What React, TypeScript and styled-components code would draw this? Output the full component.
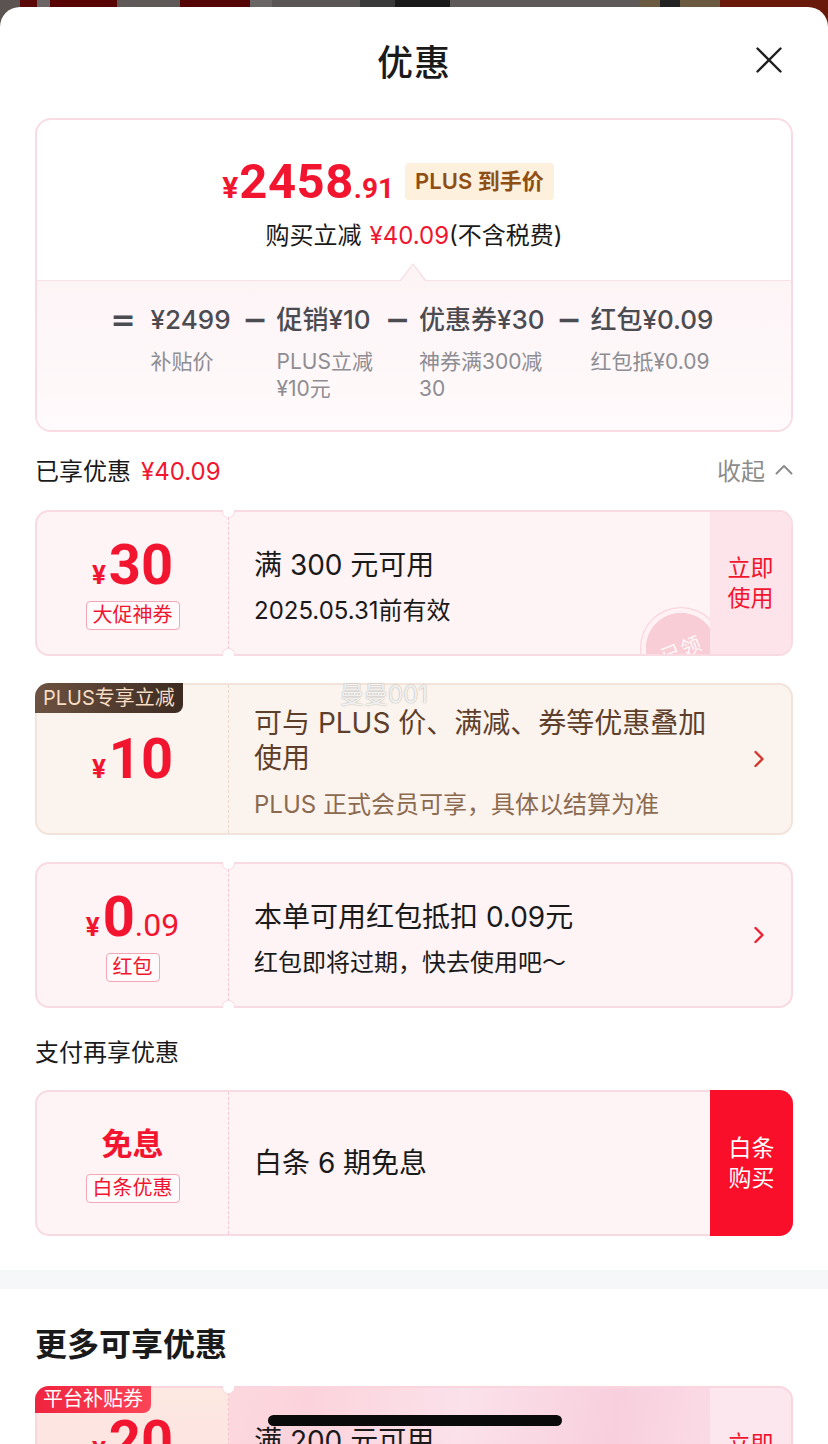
import React from 'react';
import styled, { createGlobalStyle, css } from 'styled-components';

const RED = '#f2152f';
const TEXT = '#1a1a1a';
const SANS = `"Inter", "Noto Sans CJK SC", sans-serif`;
const NUM = `"Roboto", "Inter", "Noto Sans CJK SC", sans-serif`;

const Global = createGlobalStyle`
  html, body { margin: 0; padding: 0; width: 828px; height: 1444px; overflow: hidden; }
  body { font-family: ${SANS}; color: ${TEXT}; }
  #root { width: 828px; height: 1444px; overflow: hidden; }
  * { box-sizing: border-box; }
`;

const Page = styled.div`
  position: relative;
  width: 828px;
  height: 1444px;
  overflow: hidden;
  padding-top: 7px;
  background: linear-gradient(
    90deg,
    #5b5252 0 20px, #5a0808 20px 37px, #6b6565 37px 50px, #580404 50px 117px,
    #5f5a58 117px 180px, #540606 180px 250px, #6a6666 250px 272px, #5a5656 272px 360px,
    #3a3a3a 360px 395px, #1a1a1a 395px 450px, #5e5a5a 450px 640px, #6a5a40 640px 660px,
    #222 660px 680px, #6a5a40 680px 720px, #6a1a0a 720px 828px
  );
`;

const Sheet = styled.div`
  position: relative;
  background: #fff;
  border-radius: 20px 20px 0 0;
  min-height: 1437px;
`;

const Header = styled.header`
  display: grid;
  grid-template-columns: 1fr auto 1fr;
  align-items: center;
  height: 106px;
`;

const Title = styled.h1`
  grid-column: 2;
  margin: 0;
  font-size: 36px;
  font-weight: 500;
  letter-spacing: 1px;
`;

const Close = styled.button`
  justify-self: end;
  margin-right: 45px;
  width: 28px;
  height: 28px;
  padding: 0;
  border: 0;
  background: none;
  display: flex;
  align-items: center;
  justify-content: center;
`;

const Content = styled.div`
  padding: 5px 35px 0;
`;

/* ---------- summary card ---------- */
const Summary = styled.section`
  border: 2px solid #f9dce3;
  border-radius: 16px;
  background: #fff;
`;

const SummaryTop = styled.div`
  padding: 36px 0 26px;
`;

const PriceRow = styled.div`
  display: flex;
  align-items: center;
  justify-content: center;
  gap: 11px;
  height: 50px;
  padding-right: 52px;
`;

const Price = styled.div`
  display: flex;
  align-items: baseline;
  color: ${RED};
  font-family: ${NUM};
  font-weight: 700;
  line-height: 1;
`;

const PriceYen = styled.span`
  font-size: 30px;
  margin-right: 1px;
`;
const PriceInt = styled.span`
  font-size: 49px;
  letter-spacing: 0.5px;
`;
const PriceDec = styled.span`
  font-size: 28px;
`;

const PlusTag = styled.span`
  height: 37px;
  line-height: 37px;
  padding: 0 10px;
  border-radius: 4px;
  background: #fdf0dc;
  color: #8f4f14;
  font-size: 22px;
  font-weight: 600;
`;

const SaveLine = styled.div`
  margin-top: 12px;
  text-align: center;
  font-size: 24px;
  line-height: 36px;
  color: ${TEXT};
`;

const Red = styled.span<{ $gap?: number }>`
  color: ${RED};
  margin-left: ${(p) => p.$gap ?? 0}px;
`;

const SummaryBottom = styled.div`
  position: relative;
  border-top: 1px solid #f9e1e6;
  border-radius: 0 0 14px 14px;
  background: linear-gradient(180deg, #fdf4f6 0%, #fffafb 100%);
  padding: 21px 0 28px;

  &::before,
  &::after {
    content: '';
    position: absolute;
    left: 50%;
    clip-path: polygon(50% 0, 100% 100%, 0 100%);
  }
  &::before {
    top: -18px;
    width: 28px;
    height: 18px;
    margin-left: -15px;
    background: #f9e1e6;
  }
  &::after {
    top: -16px;
    width: 25px;
    height: 17px;
    margin-left: -13.5px;
    background: #fdf4f6;
  }
`;

const Equation = styled.div`
  display: flex;
  justify-content: center;
  align-items: flex-start;
  gap: 12px;
  padding-right: 4px;
`;

const Op = styled.span<{ $eq?: boolean }>`
  width: 22px;
  text-align: center;
  font-family: "DejaVu Sans", sans-serif;
  font-size: 30px;
  font-weight: 700;
  line-height: 36px;
  color: #4b4b52;
  margin-right: ${(p) => (p.$eq ? 6 : 0)}px;
`;

const Term = styled.div`
  display: flex;
  flex-direction: column;
`;

const TermMain = styled.span`
  font-size: 26px;
  font-weight: 500;
  line-height: 36px;
  color: #4b4b52;
  white-space: nowrap;
`;

const TermSub = styled.span`
  margin-top: 10px;
  font-size: 21px;
  line-height: 27px;
  color: #8d8d93;
  white-space: nowrap;
`;

/* ---------- section headings ---------- */
const SectionHead = styled.div<{ $top: number; $bottom: number }>`
  display: flex;
  justify-content: space-between;
  align-items: center;
  height: 40px;
  margin: ${(p) => p.$top}px 0 ${(p) => p.$bottom}px;
  font-size: 24px;
  color: ${TEXT};
`;

const Collapse = styled.span`
  display: flex;
  align-items: center;
  gap: 10px;
  color: #8c8c8c;
`;

const BigHead = styled.h2`
  margin: 27px 0 17px;
  height: 48px;
  line-height: 48px;
  font-size: 32px;
  font-weight: 600;
  color: ${TEXT};
`;

const Band = styled.div`
  margin-top: 34px;
  height: 19px;
  background: #f6f7f9;
`;

const CouponList = styled.div`
  display: flex;
  flex-direction: column;
  gap: 27px;
`;

/* ---------- coupon card ---------- */
type Tone = 'pink' | 'plus' | 'promo';

const toneBorder: Record<Tone, string> = {
  pink: '#f8dbe2',
  plus: '#f2e4da',
  promo: '#f9d6de',
};
const toneDash: Record<Tone, string> = {
  pink: '#f2c9d2',
  plus: '#ead8ca',
  promo: '#f3c4cf',
};

const Card = styled.div<{ $tone: Tone; $h: number }>`
  position: relative;
  display: flex;
  height: ${(p) => p.$h}px;
  border: 2px solid ${(p) => toneBorder[p.$tone]};
  border-radius: 14px;
  background: ${(p) =>
    p.$tone === 'plus'
      ? '#fbf4ee'
      : p.$tone === 'promo'
      ? 'linear-gradient(100deg, #fde4e4 0%, #fcd3dc 35%, #fbe1ea 55%, #f8cfdd 75%, #fde6ee 100%)'
      : '#fef3f5'};
`;

const Left = styled.div<{ $tone: Tone }>`
  width: 192px;
  flex: none;
  display: flex;
  flex-direction: column;
  align-items: center;
  justify-content: center;
  border-right: 1px dashed ${(p) => toneDash[p.$tone]};
  border-radius: 12px 0 0 12px;
  ${(p) =>
    p.$tone === 'promo' &&
    css`
      background: linear-gradient(180deg, #fde8e2, #fde0e0);
    `}
`;

const Notch = styled.span<{ $pos: 'top' | 'bottom'; $tone: Tone }>`
  position: absolute;
  left: 185px;
  width: 13px;
  height: 8px;
  background: #fff;
  border: 1.5px solid ${(p) => toneBorder[p.$tone]};
  ${(p) =>
    p.$pos === 'top'
      ? css`
          top: -2px;
          border-top: 0;
          border-radius: 0 0 7px 7px;
        `
      : css`
          bottom: -2px;
          border-bottom: 0;
          border-radius: 7px 7px 0 0;
        `}
`;

const Mid = styled.div<{ $shift: number }>`
  position: relative;
  flex: 1;
  min-width: 0;
  overflow: hidden;
  display: flex;
  flex-direction: column;
  justify-content: center;
  padding-left: 25px;
  padding-top: ${(p) => p.$shift}px;
`;

const MainText = styled.div<{ $brown?: boolean }>`
  font-size: 28px;
  line-height: 36px;
  color: ${(p) => (p.$brown ? '#5e3f2b' : TEXT)};
  white-space: nowrap;
`;

const PlusMain = styled(MainText)`
  line-height: 35px;
`;

const SubText = styled.div<{ $brown?: boolean; $gap: number }>`
  margin-top: ${(p) => p.$gap}px;
  font-size: 24px;
  line-height: 36px;
  color: ${(p) => (p.$brown ? '#8c6a50' : TEXT)};
  white-space: nowrap;
`;

const Action = styled.div<{ $solid?: boolean; $bg?: string }>`
  flex: none;
  width: 81px;
  display: flex;
  align-items: center;
  justify-content: center;
  text-align: center;
  font-size: 23px;
  line-height: 30px;
  border-radius: 0 12px 12px 0;
  color: ${RED};
  background: ${(p) => p.$bg ?? '#fde3ea'};
  ${(p) =>
    p.$solid &&
    css`
      width: 83px;
      margin: -2px -2px -2px 0;
      border-radius: 0 14px 14px 0;
      background: #fa0f2b;
      color: #fff;
    `}
`;

const ArrowCell = styled.div`
  flex: none;
  width: 64px;
  display: flex;
  align-items: center;
  justify-content: center;
`;

const Amount = styled.div`
  display: flex;
  align-items: baseline;
  height: 56px;
  line-height: 56px;
  color: ${RED};
  font-family: ${NUM};
  font-weight: 700;
`;
const AmtYen = styled.span`
  font-size: 26px;
  margin-right: 3px;
`;
const AmtInt = styled.span`
  font-size: 56px;
`;
const AmtDec = styled.span`
  font-size: 32px;
  font-weight: 400;
`;

const FreeText = styled.div`
  font-size: 31px;
  font-weight: 700;
  line-height: 40px;
  color: ${RED};
`;

const Tag = styled.span<{ $gap: number }>`
  margin-top: ${(p) => p.$gap}px;
  height: 29px;
  padding: 0 6px;
  border: 1px solid #f1a7b4;
  border-radius: 4px;
  font-size: 20px;
  line-height: 27px;
  color: ${RED};
  background: rgba(255, 255, 255, 0.55);
`;

const Badge = styled.span<{ $kind: 'plus' | 'promo' }>`
  position: absolute;
  top: -2px;
  left: -2px;
  padding: 0 8px;
  border-radius: 14px 0 8px 0;
  font-size: 20px;
  white-space: nowrap;
  ${(p) =>
    p.$kind === 'plus'
      ? css`
          height: 30px;
          line-height: 30px;
          color: #f6dcc1;
          background: linear-gradient(90deg, #6d5241, #3c2b21);
        `
      : css`
          height: 27px;
          line-height: 27px;
          color: #fff;
          background: linear-gradient(90deg, #f0243f, #fb4457);
        `}
`;

const Stamp = styled.div`
  position: absolute;
  left: 411px;
  top: 95px;
  width: 82px;
  height: 82px;
  border-radius: 50%;
  background: radial-gradient(circle, #f9cdd6 0 60%, #fff1f4 61% 68%, #f9d5dd 69% 100%);
  display: flex;
  align-items: center;
  justify-content: center;
`;

const StampText = styled.span`
  transform: rotate(-22deg);
  font-size: 20px;
  color: rgba(255, 255, 255, 0.9);
  letter-spacing: 1px;
`;

const Watermark = styled.span`
  position: absolute;
  left: 340px;
  top: 668px;
  font-size: 24px;
  color: rgba(255, 255, 255, 0.85);
  text-shadow: 0 0 1px rgba(0, 0, 0, 0.3), 0 0 2px rgba(0, 0, 0, 0.12);
  pointer-events: none;
`;

const HomeBar = styled.span`
  position: absolute;
  left: 268px;
  top: 1415px;
  width: 294px;
  height: 11px;
  border-radius: 6px;
  background: #0a0a0a;
`;

/* ---------- icons ---------- */
const CloseIcon = () => (
  <svg width="26" height="26" viewBox="0 0 26 26">
    <path d="M1.5 1.5 L24.5 24.5 M24.5 1.5 L1.5 24.5" stroke="#1f1f1f" strokeWidth="2.4" strokeLinecap="round" />
  </svg>
);

const ChevronUp = () => (
  <svg width="18" height="11" viewBox="0 0 18 11">
    <path d="M1.5 9.5 L9 2 L16.5 9.5" stroke="#8c8c8c" strokeWidth="2" fill="none" strokeLinecap="round" strokeLinejoin="round" />
  </svg>
);

const ChevronRight = ({ color }: { color: string }) => (
  <svg width="12" height="18" viewBox="0 0 12 18">
    <path d="M2.5 2 L9.5 9 L2.5 16" stroke={color} strokeWidth="2.4" fill="none" strokeLinecap="round" strokeLinejoin="round" />
  </svg>
);

/* ---------- data ---------- */
const terms = [
  { main: '¥2499', sub: ['补贴价'] },
  { main: '促销¥10', sub: ['PLUS立减', '¥10元'] },
  { main: '优惠券¥30', sub: ['神券满300减', '30'] },
  { main: '红包¥0.09', sub: ['红包抵¥0.09'] },
];

const Notches = ({ tone }: { tone: Tone }) => (
  <>
    <Notch $pos="top" $tone={tone} />
    <Notch $pos="bottom" $tone={tone} />
  </>
);

export default function App() {
  return (
    <Page>
      <Global />
      <Sheet>
        <Header>
          <Title>优惠</Title>
          <Close aria-label="关闭">
            <CloseIcon />
          </Close>
        </Header>

        <Content>
          <Summary>
            <SummaryTop>
              <PriceRow>
                <Price>
                  <PriceYen>¥</PriceYen>
                  <PriceInt>2458</PriceInt>
                  <PriceDec>.91</PriceDec>
                </Price>
                <PlusTag>PLUS 到手价</PlusTag>
              </PriceRow>
              <SaveLine>
                购买立减<Red $gap={8}>¥40.09</Red>(不含税费)
              </SaveLine>
            </SummaryTop>
            <SummaryBottom>
              <Equation>
                <Op $eq>=</Op>
                {terms.map((t, i) => (
                  <React.Fragment key={t.main}>
                    {i > 0 && <Op>−</Op>}
                    <Term>
                      <TermMain>{t.main}</TermMain>
                      <TermSub>
                        {t.sub.map((s, j) => (
                          <React.Fragment key={s}>
                            {j > 0 && <br />}
                            {s}
                          </React.Fragment>
                        ))}
                      </TermSub>
                    </Term>
                  </React.Fragment>
                ))}
              </Equation>
            </SummaryBottom>
          </Summary>

          <SectionHead $top={17} $bottom={21}>
            <span>
              已享优惠<Red $gap={10}>¥40.09</Red>
            </span>
            <Collapse>
              收起
              <ChevronUp />
            </Collapse>
          </SectionHead>

          <CouponList>
            <Card $tone="pink" $h={146}>
              <Left $tone="pink">
                <Amount>
                  <AmtYen>¥</AmtYen>
                  <AmtInt>30</AmtInt>
                </Amount>
                <Tag $gap={8}>大促神券</Tag>
              </Left>
              <Mid $shift={10}>
                <MainText>满 300 元可用</MainText>
                <SubText $gap={10}>2025.05.31前有效</SubText>
                <Stamp>
                  <StampText>已领</StampText>
                </Stamp>
              </Mid>
              <Action>
                立即
                <br />
                使用
              </Action>
              <Notches tone="pink" />
            </Card>

            <Card $tone="plus" $h={152}>
              <Left $tone="plus">
                <Amount>
                  <AmtYen>¥</AmtYen>
                  <AmtInt>10</AmtInt>
                </Amount>
              </Left>
              <Mid $shift={10}>
                <PlusMain $brown>
                  可与 PLUS 价、满减、券等优惠叠加
                  <br />
                  使用
                </PlusMain>
                <SubText $brown $gap={11}>
                  PLUS 正式会员可享，具体以结算为准
                </SubText>
              </Mid>
              <ArrowCell>
                <ChevronRight color="#d4352a" />
              </ArrowCell>
              <Badge $kind="plus">PLUS专享立减</Badge>
            </Card>

            <Card $tone="pink" $h={146}>
              <Left $tone="pink">
                <Amount>
                  <AmtYen>¥</AmtYen>
                  <AmtInt>0</AmtInt>
                  <AmtDec>.09</AmtDec>
                </Amount>
                <Tag $gap={8}>红包</Tag>
              </Left>
              <Mid $shift={10}>
                <MainText>本单可用红包抵扣 0.09元</MainText>
                <SubText $gap={10}>红包即将过期，快去使用吧～</SubText>
              </Mid>
              <ArrowCell>
                <ChevronRight color="#ec2030" />
              </ArrowCell>
              <Notches tone="pink" />
            </Card>
          </CouponList>

          <SectionHead $top={22} $bottom={20}>
            <span>支付再享优惠</span>
          </SectionHead>

          <Card $tone="pink" $h={146}>
            <Left $tone="pink">
              <FreeText>免息</FreeText>
              <Tag $gap={10}>白条优惠</Tag>
            </Left>
            <Mid $shift={0}>
              <MainText>白条 6 期免息</MainText>
            </Mid>
            <Action $solid>
              白条
              <br />
              购买
            </Action>
          </Card>
        </Content>

        <Band />

        <Content>
          <BigHead>更多可享优惠</BigHead>
          <Card $tone="promo" $h={146}>
            <Left $tone="promo">
              <Amount>
                <AmtYen>¥</AmtYen>
                <AmtInt>20</AmtInt>
              </Amount>
              <Tag $gap={8}>平台补贴</Tag>
            </Left>
            <Mid $shift={10}>
              <MainText>满 200 元可用</MainText>
              <SubText $gap={10}>2025.05.31前有效</SubText>
            </Mid>
            <Action $bg="#fde7ee">
              立即
              <br />
              使用
            </Action>
            <Notches tone="promo" />
            <Badge $kind="promo">平台补贴券</Badge>
          </Card>
        </Content>

        <Watermark>曼曼001</Watermark>
      </Sheet>
      <HomeBar />
    </Page>
  );
}
